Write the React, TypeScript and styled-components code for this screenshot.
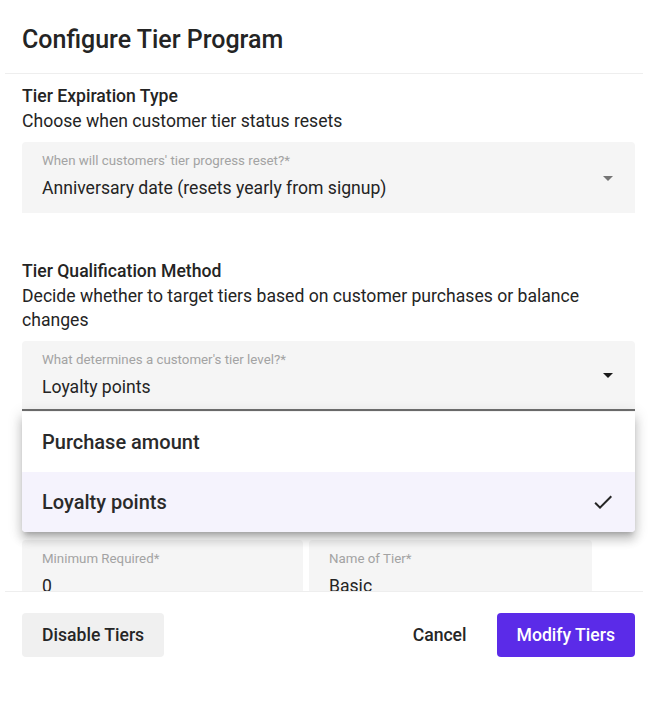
import React from "react";
import styled, { createGlobalStyle } from "styled-components";

const Global = createGlobalStyle`
  html, body { margin: 0; padding: 0; background: #ffffff; }
  body { font-family: Roboto, "Noto Sans", Arial, sans-serif; color: #212121; }
  * { box-sizing: border-box; }
`;

const Dialog = styled.div`
  width: 648px;
  height: 728px;
  background: #ffffff;
  display: flex;
  flex-direction: column;
`;

const Header = styled.header`
  padding: 24px 22px 17px;
`;

const Title = styled.h1`
  margin: 0;
  font-size: 25px;
  line-height: 32px;
  font-weight: 500;
  color: #242424;
`;

const Divider = styled.hr`
  margin: 0 5px;
  border: none;
  border-top: 1px solid #eeeeee;
  height: 0;
  flex-shrink: 0;
`;

const Content = styled.div`
  height: 517px;
  flex-shrink: 0;
  overflow: hidden;
  padding: 10px 13px 0 22px;
  display: flex;
  flex-direction: column;
  & > * {
    flex-shrink: 0;
  }
`;

const Section = styled.section<{ $gap?: number }>`
  display: flex;
  flex-direction: column;
  margin-bottom: ${(p) => p.$gap ?? 0}px;
`;

const SectionTitle = styled.h2`
  margin: 0 0 1px;
  font-size: 17.6px;
  line-height: 24px;
  font-weight: 500;
  color: #242424;
`;

const SectionText = styled.p`
  margin: 0 0 9px;
  width: 613px;
  font-size: 17.6px;
  line-height: 24px;
  font-weight: 400;
  color: #242424;
`;

const FieldWrap = styled.div`
  position: relative;
  width: 613px;
`;

const Field = styled.div<{ $active?: boolean }>`
  position: relative;
  height: ${(p) => (p.$active ? 70 : 71)}px;
  background: #f5f5f5;
  border-radius: 4px 4px 0 0;
  padding: 10px 48px 0 20px;
  border-bottom: ${(p) => (p.$active ? "2px solid #6f6f6f" : "none")};
`;

const FieldLabel = styled.div`
  font-size: 13.3px;
  line-height: 17px;
  color: #a3a3a3;
  white-space: nowrap;
`;

const FieldValue = styled.div`
  margin-top: 7px;
  font-size: 17.6px;
  line-height: 24px;
  color: #242424;
  white-space: nowrap;
`;

const Arrow = styled.svg<{ $active?: boolean }>`
  position: absolute;
  right: 15px;
  top: 50%;
  margin-top: -12px;
  width: 24px;
  height: 24px;
  fill: ${(p) => (p.$active ? "#1a1a1a" : "#757575")};
`;

const Menu = styled.ul`
  position: absolute;
  z-index: 10;
  left: 0;
  right: 0;
  top: calc(100% + 1px);
  margin: 0;
  padding: 0;
  list-style: none;
  background: #ffffff;
  border-radius: 0 0 4px 4px;
  overflow: hidden;
  box-shadow: 0 5px 5px -3px rgba(0, 0, 0, 0.2), 0 8px 10px 1px rgba(0, 0, 0, 0.14),
    0 3px 14px 2px rgba(0, 0, 0, 0.12);
`;

const MenuItem = styled.li<{ $selected?: boolean }>`
  height: 60px;
  display: flex;
  align-items: center;
  justify-content: space-between;
  padding: 0 20px;
  font-size: 20px;
  font-weight: 500;
  color: #2a2a2a;
  background: ${(p) => (p.$selected ? "#f5f3fd" : "#ffffff")};
`;

const Check = styled.svg`
  width: 24px;
  height: 24px;
  fill: #262626;
`;

const Hidden = styled.div`
  height: 129px;
`;

const TierRow = styled.div`
  display: grid;
  grid-template-columns: 281px 283px 1fr;
  gap: 6px;
  width: 613px;
`;

const Footer = styled.footer`
  display: flex;
  align-items: center;
  padding: 21px 13px 0 22px;
`;

const Spacer = styled.div`
  flex: 1;
`;

const Button = styled.button<{ $variant: "gray" | "text" | "primary" }>`
  height: 44px;
  border: none;
  border-radius: 4px;
  padding: 0 ${(p) => (p.$variant === "text" ? "16px" : "20px")};
  font-family: inherit;
  font-size: 17.6px;
  font-weight: 500;
  cursor: pointer;
  margin-left: ${(p) => (p.$variant === "primary" ? "14px" : "0")};
  background: ${(p) =>
    p.$variant === "gray" ? "#f0f0f0" : p.$variant === "primary" ? "#5b2be8" : "transparent"};
  color: ${(p) => (p.$variant === "primary" ? "#ffffff" : "#262626")};
`;

const ArrowIcon = ({ active }: { active?: boolean }) => (
  <Arrow $active={active} viewBox="0 0 24 24">
    <path d="M7 10l5 5 5-5z" />
  </Arrow>
);

export default function App() {
  return (
    <>
      <Global />
      <Dialog>
        <Header>
          <Title>Configure Tier Program</Title>
        </Header>
        <Divider />
        <Content>
          <Section $gap={46}>
            <SectionTitle>Tier Expiration Type</SectionTitle>
            <SectionText>Choose when customer tier status resets</SectionText>
            <FieldWrap>
              <Field>
                <FieldLabel>When will customers' tier progress reset?*</FieldLabel>
                <FieldValue>Anniversary date (resets yearly from signup)</FieldValue>
                <ArrowIcon />
              </Field>
            </FieldWrap>
          </Section>
          <Section>
            <SectionTitle>Tier Qualification Method</SectionTitle>
            <SectionText>
              Decide whether to target tiers based on customer purchases or balance changes
            </SectionText>
            <FieldWrap>
              <Field $active>
                <FieldLabel>What determines a customer's tier level?*</FieldLabel>
                <FieldValue>Loyalty points</FieldValue>
                <ArrowIcon active />
              </Field>
              <Menu>
                <MenuItem>Purchase amount</MenuItem>
                <MenuItem $selected>
                  Loyalty points
                  <Check viewBox="0 0 24 24">
                    <path d="M9 16.17L4.83 12l-1.42 1.41L9 19 21 7l-1.41-1.41z" />
                  </Check>
                </MenuItem>
              </Menu>
            </FieldWrap>
          </Section>
          <Hidden />
          <TierRow>
            <Field>
              <FieldLabel>Minimum Required*</FieldLabel>
              <FieldValue>0</FieldValue>
            </Field>
            <Field>
              <FieldLabel>Name of Tier*</FieldLabel>
              <FieldValue>Basic</FieldValue>
            </Field>
          </TierRow>
        </Content>
        <Divider />
        <Footer>
          <Button $variant="gray">Disable Tiers</Button>
          <Spacer />
          <Button $variant="text">Cancel</Button>
          <Button $variant="primary">Modify Tiers</Button>
        </Footer>
      </Dialog>
    </>
  );
}
